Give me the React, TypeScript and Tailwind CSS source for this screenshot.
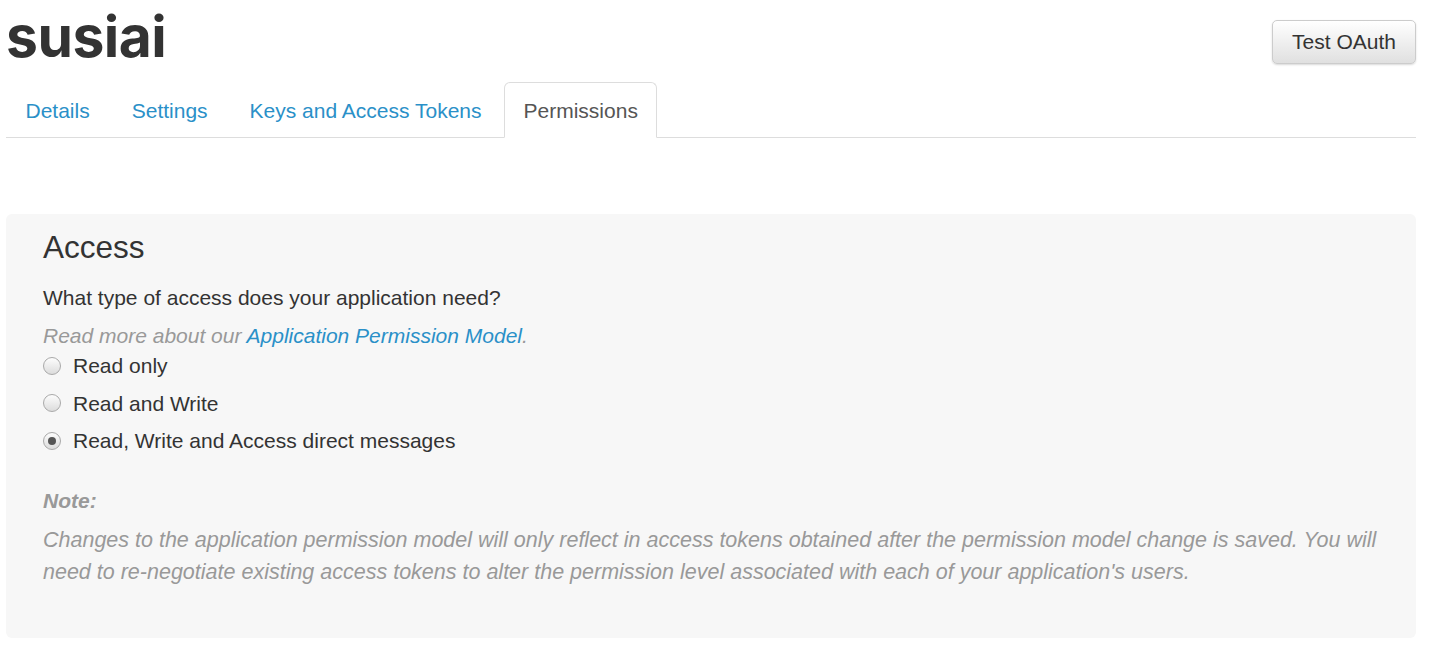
import { useState } from "react";

const tabs = ["Details", "Settings", "Keys and Access Tokens", "Permissions"];

const options = [
  "Read only",
  "Read and Write",
  "Read, Write and Access direct messages",
];

function Radio({ checked }: { checked: boolean }) {
  return (
    <span className="flex h-[18px] w-[18px] items-center justify-center rounded-full border border-[#a9a9a9] bg-gradient-to-b from-[#fdfdfd] to-[#dcdcdc]">
      {checked && <span className="h-[8px] w-[8px] rounded-full bg-[#555]" />}
    </span>
  );
}

export default function App() {
  const [active, setActive] = useState("Permissions");
  const [access, setAccess] = useState(2);

  return (
    <div
      className="min-h-[660px] bg-white pl-[6px] pr-[33px] text-[21px] text-[#333]"
      style={{ fontFamily: '"Liberation Sans", Arial, sans-serif' }}
    >
      <div className="flex h-[82px] items-start justify-between">
        <h1
          className="mt-[5px] text-[57px] font-bold leading-[64px] tracking-[-0.5px] text-[#333]"
          style={{ fontFamily: "Inter, sans-serif" }}
        >
          susiai
        </h1>
        <button className="mt-[20px] h-[44px] rounded-[5px] border border-[#ccc] bg-gradient-to-b from-white to-[#e0e0e0] px-[19px] text-[21px] text-[#333] shadow-[0_1px_2px_rgba(0,0,0,0.15)]">
          Test OAuth
        </button>
      </div>

      <ul className="flex border-b border-[#ddd]">
        {tabs.map((t) => (
          <li key={t} className="-mb-px mr-[3px]">
            <button
              onClick={() => setActive(t)}
              className={
                t === active
                  ? "h-[56px] rounded-t-[6px] border border-[#ddd] border-b-white bg-white px-[18.5px] pt-[2px] text-[#555]"
                  : "h-[56px] rounded-t-[6px] border border-transparent px-[18.5px] pt-[2px] text-[#2a90c8]"
              }
            >
              {t}
            </button>
          </li>
        ))}
      </ul>

      <div className="mt-[76px] rounded-[6px] bg-[#f7f7f7] px-[37px] pb-[50px] pt-[15px]">
        <h3 className="text-[31.5px] leading-[36px] text-[#333]">Access</h3>
        <p className="mt-[17px] leading-[31.5px]">
          What type of access does your application need?
        </p>
        <p className="mt-[6px] italic leading-[31.5px] text-[#999]">
          Read more about our{" "}
          <a className="text-[#2a90c8]">Application Permission Model</a>.
        </p>
        <div className="mt-[-1px] flex flex-col gap-[6px]">
          {options.map((o, i) => (
            <label
              key={o}
              onClick={() => setAccess(i)}
              className="flex h-[31.5px] cursor-pointer items-center gap-[12px]"
            >
              <Radio checked={access === i} />
              <span>{o}</span>
            </label>
          ))}
        </div>
        <p className="mt-[28px] font-bold italic leading-[31.5px] text-[#999]">
          Note:
        </p>
        <p className="mt-[9px] text-[21.5px] italic leading-[31.5px] text-[#999]">
          Changes to the application permission model will only reflect in
          access tokens obtained after the permission model change is saved.
          You will need to re-negotiate existing access tokens to alter the
          permission level associated with each of your application's users.
        </p>
      </div>
    </div>
  );
}
